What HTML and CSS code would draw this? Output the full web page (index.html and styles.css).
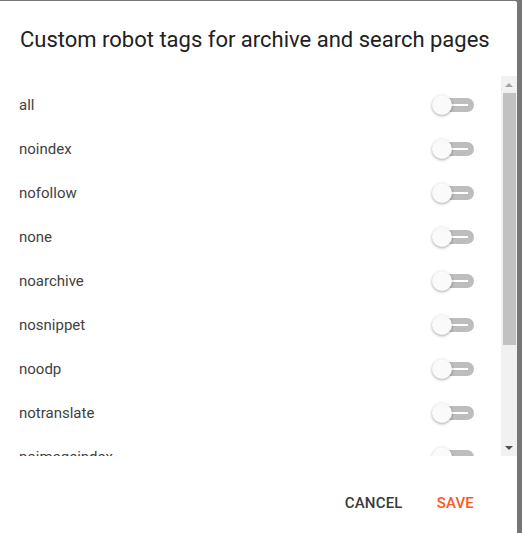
FILE: index.html
```html
<!DOCTYPE html>
<html>
<head>
<meta charset="utf-8">
<link rel="stylesheet" href="styles.css">
</head>
<body>
<div class="dialog">
  <div class="title">Custom robot tags for archive and search pages</div>
  <div class="body">
    <div class="list">
      <div class="row"><span>all</span><span class="switch"><span class="track"></span><span class="thumb"></span></span></div>
      <div class="row"><span>noindex</span><span class="switch"><span class="track"></span><span class="thumb"></span></span></div>
      <div class="row"><span>nofollow</span><span class="switch"><span class="track"></span><span class="thumb"></span></span></div>
      <div class="row"><span>none</span><span class="switch"><span class="track"></span><span class="thumb"></span></span></div>
      <div class="row"><span>noarchive</span><span class="switch"><span class="track"></span><span class="thumb"></span></span></div>
      <div class="row"><span>nosnippet</span><span class="switch"><span class="track"></span><span class="thumb"></span></span></div>
      <div class="row"><span>noodp</span><span class="switch"><span class="track"></span><span class="thumb"></span></span></div>
      <div class="row"><span>notranslate</span><span class="switch"><span class="track"></span><span class="thumb"></span></span></div>
      <div class="row"><span>noimageindex</span><span class="switch"><span class="track"></span><span class="thumb"></span></span></div>
    </div>
    <div class="scrollbar">
      <div class="arrow up"></div>
      <div class="thumbbar"></div>
      <div class="spacer"></div>
      <div class="arrow down"></div>
    </div>
  </div>
  <div class="footer">
    <span class="btn cancel">CANCEL</span>
    <span class="btn save">SAVE</span>
  </div>
</div>
</body>
</html>
```

FILE: styles.css
```css
html, body {
  margin: 0;
  padding: 0;
}
body {
  background: #767676;
  width: 522px;
  height: 533px;
  overflow: hidden;
  font-family: Roboto, "Liberation Sans", sans-serif;
}
.dialog {
  margin-top: 1px;
  width: 517px;
  height: 540px;
  background: #fff;
  border-top-right-radius: 2px;
  display: flex;
  flex-direction: column;
}
.title {
  padding: 23px 20px 0 20px;
  font-size: 22px;
  line-height: 32px;
  color: #212121;
  height: 32px;
  white-space: nowrap;
}
.body {
  margin-top: 20px;
  height: 380px;
  display: flex;
}
.list {
  flex: 1;
  overflow: hidden;
  padding-top: 7px;
}
.row {
  height: 44px;
  display: flex;
  align-items: center;
  justify-content: space-between;
  padding: 0 27px 0 19px;
  font-size: 15px;
  color: #424242;
}
.switch {
  position: relative;
  width: 42px;
  height: 20px;
  display: block;
}
.track {
  position: absolute;
  left: 6px;
  right: 0;
  top: 3px;
  height: 14px;
  border-radius: 7px;
  background: #bdbdbd;
}
.track::after {
  content: "";
  position: absolute;
  left: 10px;
  right: 6px;
  top: 6px;
  height: 2px;
  background: #fff;
}
.thumb {
  position: absolute;
  left: 0;
  top: 0;
  width: 20px;
  height: 20px;
  border-radius: 50%;
  background: #fafafa;
  box-shadow: 0 1px 3px rgba(0, 0, 0, 0.35);
}
.scrollbar {
  width: 16px;
  background: #f1f1f1;
  display: flex;
  flex-direction: column;
  align-items: center;
}
.arrow {
  height: 17px;
  width: 16px;
  display: flex;
  align-items: center;
  justify-content: center;
}
.arrow::before {
  content: "";
  width: 0;
  height: 0;
  border-left: 4px solid transparent;
  border-right: 4px solid transparent;
}
.arrow.up::before {
  border-bottom: 4px solid #a3a3a3;
}
.arrow.down::before {
  border-top: 4px solid #505050;
}
.thumbbar {
  width: 13px;
  height: 252px;
  background: #c1c1c1;
  margin-left: 1px;
}
.spacer {
  flex: 1;
}
.footer {
  display: flex;
  justify-content: flex-end;
  align-items: center;
  gap: 34px;
  padding: 37px 43px 0 0;
}
.btn {
  font-size: 15px;
  font-weight: 500;
  line-height: 20px;
  letter-spacing: 0.2px;
}
.cancel {
  color: #3a3a3a;
}
.save {
  color: #ff5722;
}
```
